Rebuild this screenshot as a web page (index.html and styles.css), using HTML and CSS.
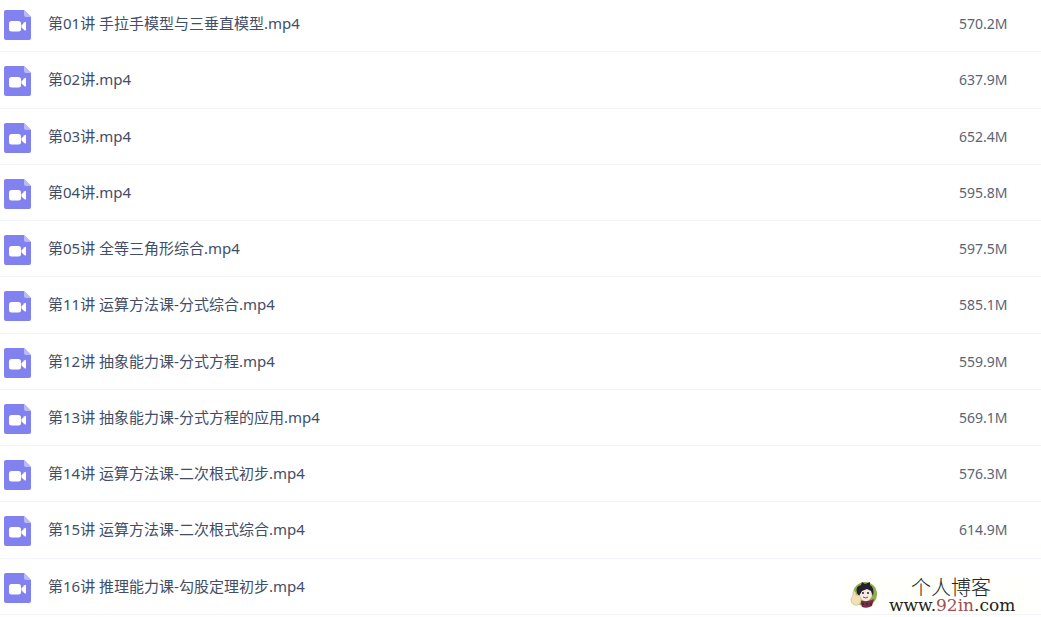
FILE: index.html
```html
<!DOCTYPE html>
<html lang="zh-CN">
<head>
    <meta charset="UTF-8">
    <title>文件列表</title>
    <link rel="stylesheet" href="styles.css">
</head>
<body>

<svg class="sprite" aria-hidden="true">
    <symbol id="video" viewBox="0 0 27 30">
        <path fill="#8182f0" d="M2 0h18l7 7v21a2 2 0 0 1-2 2H2a2 2 0 0 1-2-2V2a2 2 0 0 1 2-2z"/>
        <path fill="#b9baf8" d="M20 0l7 7h-5a2 2 0 0 1-2-2z"/>
        <rect x="5" y="11" width="12" height="10.500" rx="2.500" fill="#fff"/>
        <path fill="#fff" d="M17.500 15.200l3-3q1.500-1 1.500.500v7q0 1.500-1.500.500L17.500 17.500z"/>
    </symbol>
</svg>

<table class="files">
    <tbody>
        <tr>
            <td class="icon"><svg><use href="#video"/></svg></td>
            <td class="name">第01讲 手拉手模型与三垂直模型.mp4</td>
            <td class="size">570.2M</td>
        </tr>
        <tr>
            <td class="icon"><svg><use href="#video"/></svg></td>
            <td class="name">第02讲.mp4</td>
            <td class="size">637.9M</td>
        </tr>
        <tr>
            <td class="icon"><svg><use href="#video"/></svg></td>
            <td class="name">第03讲.mp4</td>
            <td class="size">652.4M</td>
        </tr>
        <tr>
            <td class="icon"><svg><use href="#video"/></svg></td>
            <td class="name">第04讲.mp4</td>
            <td class="size">595.8M</td>
        </tr>
        <tr>
            <td class="icon"><svg><use href="#video"/></svg></td>
            <td class="name">第05讲 全等三角形综合.mp4</td>
            <td class="size">597.5M</td>
        </tr>
        <tr>
            <td class="icon"><svg><use href="#video"/></svg></td>
            <td class="name">第11讲 运算方法课-分式综合.mp4</td>
            <td class="size">585.1M</td>
        </tr>
        <tr>
            <td class="icon"><svg><use href="#video"/></svg></td>
            <td class="name">第12讲 抽象能力课-分式方程.mp4</td>
            <td class="size">559.9M</td>
        </tr>
        <tr>
            <td class="icon"><svg><use href="#video"/></svg></td>
            <td class="name">第13讲 抽象能力课-分式方程的应用.mp4</td>
            <td class="size">569.1M</td>
        </tr>
        <tr>
            <td class="icon"><svg><use href="#video"/></svg></td>
            <td class="name">第14讲 运算方法课-二次根式初步.mp4</td>
            <td class="size">576.3M</td>
        </tr>
        <tr>
            <td class="icon"><svg><use href="#video"/></svg></td>
            <td class="name">第15讲 运算方法课-二次根式综合.mp4</td>
            <td class="size">614.9M</td>
        </tr>
        <tr>
            <td class="icon"><svg><use href="#video"/></svg></td>
            <td class="name">第16讲 推理能力课-勾股定理初步.mp4</td>
            <td class="size"></td>
        </tr>
    </tbody>
</table>

<div class="watermark">
    <svg class="avatar" viewBox="0 0 28 28">
        <circle cx="15" cy="13" r="12" fill="#8fae4e"/>
        <path fill="#f8e9e6" d="M9 9q6-4 12 0l1 6q-3 6-7 5-5-1-6-6z"/>
        <path fill="#25212c" d="M7 12Q5 5 11 4l1-3 3 2 5-2v3q5 3 3 11l-2-5-4-2-5 2-3 5z"/>
        <circle cx="13" cy="12" r="1" fill="#25212c"/>
        <circle cx="18" cy="12" r="1" fill="#25212c"/>
        <path d="M13 16q3 2 5 0" fill="none" stroke="#b03a48"/>
        <path fill="#7a2c48" d="M10 19q6 3 14-1l-2 7q-5 3-10 1z"/>
        <path stroke="#2c1a2a" stroke-dasharray="2 2" d="M12 23h10"/>
        <path fill="#f3dfb4" stroke="#d8c6a8" d="M3 11q2-2 3 3 5 0 5 5-1 6-6 5-4-1-4-5 0-3 2-4z"/>
    </svg>
    <div class="site">
        <div class="site-name">个人博客</div>
        <div class="site-url">www.<span>92in</span>.com</div>
    </div>
</div>

</body>
</html>
```
FILE: styles.css
```css
body {
    margin: 0;
    background: #fff;
    font-family: "Noto Sans", "Noto Sans CJK SC", sans-serif;
    overflow: hidden;
}

.sprite {
    position: absolute;
    width: 0;
    height: 0;
}

.files {
    width: 100%;
    margin-top: -4px;
    border-collapse: separate;
    border-spacing: 0;
}

.files td {
    height: 55px;
    padding: 0;
    border-bottom: 1px solid #f1f4fa;
    vertical-align: top;
    font-size: 15px;
    line-height: 54px;
    color: #424e67;
}

.files tr:nth-child(4n+2) td {
    height: 56px;
}

.files .icon {
    width: 48px;
}

.icon svg {
    display: block;
    width: 27px;
    height: 30px;
    margin: 14px 0 0 4px;
}

.files .size {
    width: 82px;
    font-size: 14px;
    line-height: 55px;
    color: #5b6475;
}

/* site mark over the last row */
.watermark {
    position: absolute;
    right: 2px;
    bottom: 4px;
    display: flex;
    align-items: center;
    width: 196px;
    height: 37px;
    background: #fffffc;
}

.avatar {
    width: 28px;
    height: 28px;
    margin: 0 11px 0 7px;
}

.site {
    color: #222;
}

.site-name {
    padding-left: 22px;
    font-family: "Noto Sans CJK SC", sans-serif;
    font-size: 20px;
    line-height: 20px;
    font-weight: 300;
}

.site-url {
    font-family: "DejaVu Serif", serif;
    font-size: 17px;
    line-height: 16px;
}

.site-url span {
    color: #a05050;
}
```
